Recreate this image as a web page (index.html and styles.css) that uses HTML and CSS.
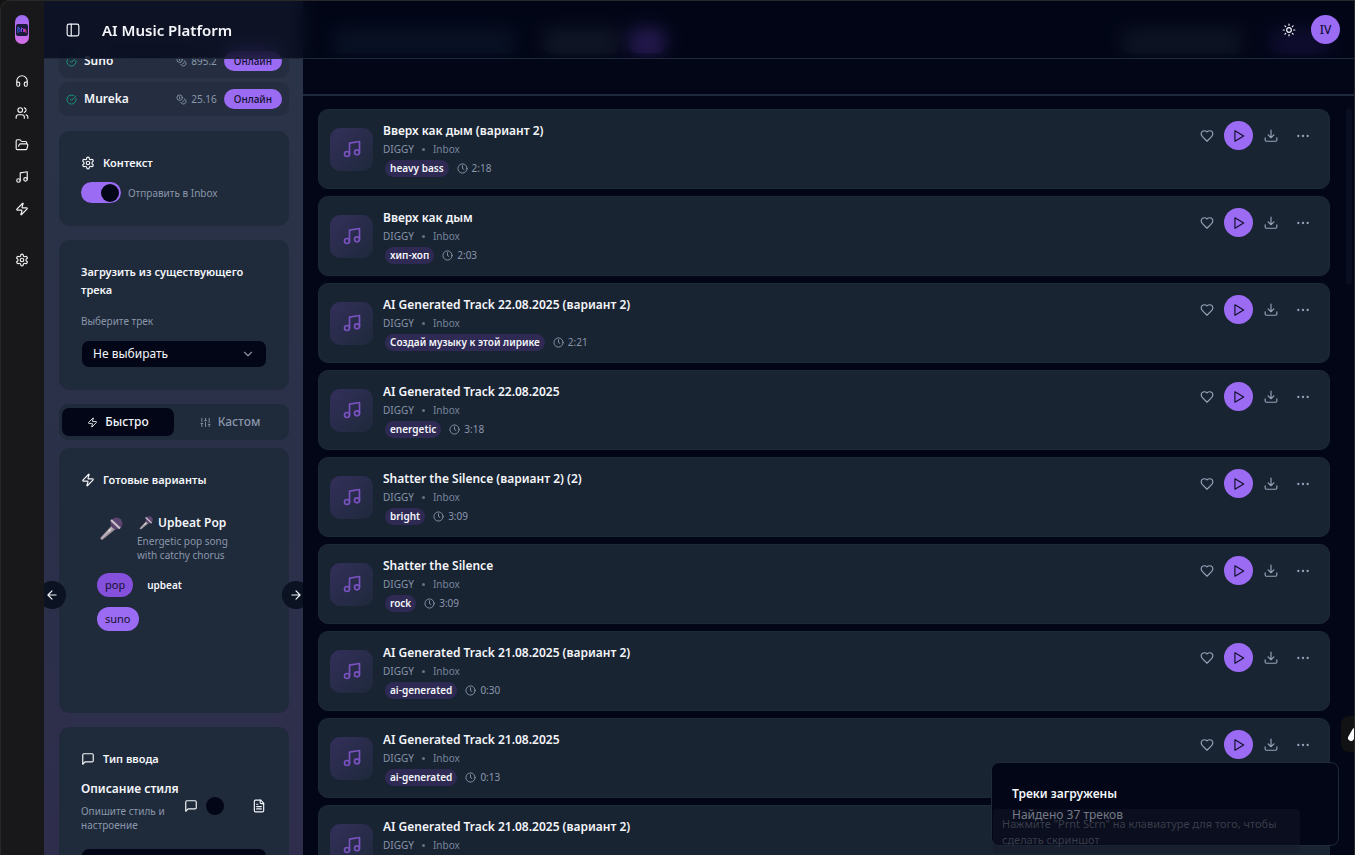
FILE: index.html
```html
<!DOCTYPE html>
<html lang="ru">
<head>
<meta charset="utf-8">
<title>AI Music Platform</title>
<link rel="stylesheet" href="styles.css">
</head>
<body>
<svg class="sprite" aria-hidden="true">
  <symbol id="i-note" viewBox="0 0 24 24"><path d="M9 18V5l12-2v13"/><circle cx="6" cy="18" r="3"/><circle cx="18" cy="16" r="3"/></symbol>
  <symbol id="i-headphones" viewBox="0 0 24 24"><path d="M3 14h3a2 2 0 0 1 2 2v3a2 2 0 0 1-2 2H5a2 2 0 0 1-2-2v-7a9 9 0 0 1 18 0v7a2 2 0 0 1-2 2h-1a2 2 0 0 1-2-2v-3a2 2 0 0 1 2-2h3"/></symbol>
  <symbol id="i-users" viewBox="0 0 24 24"><path d="M16 21v-2a4 4 0 0 0-4-4H6a4 4 0 0 0-4 4v2"/><circle cx="9" cy="7" r="4"/><path d="M22 21v-2a4 4 0 0 0-3-3.87M16 3.13a4 4 0 0 1 0 7.75"/></symbol>
  <symbol id="i-folder" viewBox="0 0 24 24"><path d="m6 14 1.5-2.9A2 2 0 0 1 9.24 10H20a2 2 0 0 1 1.94 2.5l-1.54 6a2 2 0 0 1-1.95 1.5H4a2 2 0 0 1-2-2V5a2 2 0 0 1 2-2h3.9a2 2 0 0 1 1.69.9l.81 1.2a2 2 0 0 0 1.67.9H18a2 2 0 0 1 2 2v2"/></symbol>
  <symbol id="i-zap" viewBox="0 0 24 24"><path d="M4 14a1 1 0 0 1-.78-1.63l9.9-10.2a.5.5 0 0 1 .86.46l-1.92 6.02A1 1 0 0 0 13 10h7a1 1 0 0 1 .78 1.63l-9.9 10.2a.5.5 0 0 1-.86-.46l1.92-6.02A1 1 0 0 0 11 14z"/></symbol>
  <symbol id="i-gear" viewBox="0 0 24 24"><path d="M12.22 2h-.44a2 2 0 0 0-2 2v.18a2 2 0 0 1-1 1.73l-.43.25a2 2 0 0 1-2 0l-.15-.08a2 2 0 0 0-2.73.73l-.22.38a2 2 0 0 0 .73 2.73l.15.1a2 2 0 0 1 1 1.72v.51a2 2 0 0 1-1 1.74l-.15.09a2 2 0 0 0-.73 2.73l.22.38a2 2 0 0 0 2.73.73l.15-.08a2 2 0 0 1 2 0l.43.25a2 2 0 0 1 1 1.73V20a2 2 0 0 0 2 2h.44a2 2 0 0 0 2-2v-.18a2 2 0 0 1 1-1.73l.43-.25a2 2 0 0 1 2 0l.15.08a2 2 0 0 0 2.73-.73l.22-.39a2 2 0 0 0-.73-2.73l-.15-.08a2 2 0 0 1-1-1.74v-.5a2 2 0 0 1 1-1.74l.15-.09a2 2 0 0 0 .73-2.73l-.22-.38a2 2 0 0 0-2.73-.73l-.15.08a2 2 0 0 1-2 0l-.43-.25a2 2 0 0 1-1-1.73V4a2 2 0 0 0-2-2z"/><circle cx="12" cy="12" r="3"/></symbol>
  <symbol id="i-check" viewBox="0 0 24 24"><path d="M21.8 10A10 10 0 1 1 17 3.34"/><path d="m9 11 3 3L22 4"/></symbol>
  <symbol id="i-coins" viewBox="0 0 24 24"><circle cx="8" cy="8" r="6"/><path d="M18.09 10.37A6 6 0 1 1 10.34 18M7 6h1v4M16.71 13.88l.7.71-2.82 2.82"/></symbol>
  <symbol id="i-sliders" viewBox="0 0 24 24"><path d="M4 21v-7M4 10V3M12 21v-9M12 8V3M20 21v-5M20 12V3M2 14h4M10 8h4M18 16h4"/></symbol>
  <symbol id="i-chat" viewBox="0 0 24 24"><path d="M21 15a2 2 0 0 1-2 2H7l-4 4V5a2 2 0 0 1 2-2h14a2 2 0 0 1 2 2z"/></symbol>
  <symbol id="i-doc" viewBox="0 0 24 24"><path d="M15 2H6a2 2 0 0 0-2 2v16a2 2 0 0 0 2 2h12a2 2 0 0 0 2-2V7z"/><path d="M14 2v4a2 2 0 0 0 2 2h4M10 9H8M16 13H8M16 17H8"/></symbol>
  <symbol id="i-chevron" viewBox="0 0 24 24"><path d="m6 9 6 6 6-6"/></symbol>
  <symbol id="i-left" viewBox="0 0 24 24"><path d="m12 19-7-7 7-7M19 12H5"/></symbol>
  <symbol id="i-right" viewBox="0 0 24 24"><path d="M5 12h14M12 5l7 7-7 7"/></symbol>
  <symbol id="i-panel" viewBox="0 0 24 24"><rect x="2" y="2" width="20" height="20" rx="3"/><path d="M9 2v20"/></symbol>
  <symbol id="i-sun" viewBox="0 0 24 24"><circle cx="12" cy="12" r="4"/><path d="M12 2v2M12 20v2M4.93 4.93l1.41 1.41M17.66 17.66l1.41 1.41M2 12h2M20 12h2M6.34 17.66l-1.41 1.41M19.07 4.93l-1.41 1.41"/></symbol>
  <symbol id="i-heart" viewBox="0 0 24 24"><path d="M19 14c1.49-1.46 3-3.21 3-5.5A5.5 5.5 0 0 0 16.5 3c-1.76 0-3 .5-4.5 2-1.5-1.5-2.74-2-4.5-2A5.5 5.5 0 0 0 2 8.5c0 2.3 1.5 4.05 3 5.5l7 7z"/></symbol>
  <symbol id="i-play" viewBox="0 0 24 24"><path d="m5 3 15 9-15 9z"/></symbol>
  <symbol id="i-download" viewBox="0 0 24 24"><path d="M22 15v4a2 2 0 0 1-2 2H4a2 2 0 0 1-2-2v-4M7 10l5 5 5-5M12 15V2"/></symbol>
  <symbol id="i-dots" viewBox="0 0 24 24"><circle cx="12" cy="12" r="1"/><circle cx="20" cy="12" r="1"/><circle cx="4" cy="12" r="1"/></symbol>
  <symbol id="i-clock" viewBox="0 0 24 24"><circle cx="12" cy="12" r="10"/><path d="M12 6v6l3 2"/></symbol>
  <symbol id="i-mic" viewBox="0 0 24 24">
    <path d="M14 7 1.6 20.4q-.6 1.4.2 1.9.7.8 2 .2L18 11z" fill="#9d929c" stroke="none"/>
    <path d="M14.5 8 2 21.5l.6.6L16 9.500z" fill="#c4bac0" stroke="none"/>
    <circle cx="17.500" cy="6.500" r="6" fill="#5b4570" stroke="none"/>
    <path d="m12 3 9 8.500" stroke="#c9c0cc" stroke-width="2.200"/>
    <circle cx="10.500" cy="13.500" r="1" fill="#ece6ea" stroke="none"/>
  </symbol>
</svg>

<div class="app">
  <nav class="rail" aria-label="Разделы">
    <a class="logo" href="#" aria-label="AI Music">
      <svg viewBox="0 0 14 12"><rect x="1" width="12" height="12" rx="2" fill="#1b1c3c"/><path d="M3 9V3l2 2v3" stroke="#3b62f0" fill="none"/><path d="M6.500 8V4l2 1v3" stroke="#8b3fe0" fill="none"/><path d="M9.500 8V5l1.500 1v3" stroke="#d83b8e" fill="none"/></svg>
    </a>
    <a href="#" aria-label="Генерация"><svg class="icon"><use href="#i-headphones"/></svg></a>
    <a href="#" aria-label="Артисты"><svg class="icon"><use href="#i-users"/></svg></a>
    <a href="#" aria-label="Проекты"><svg class="icon"><use href="#i-folder"/></svg></a>
    <a href="#" aria-label="Треки"><svg class="icon"><use href="#i-note"/></svg></a>
    <a href="#" aria-label="Быстро"><svg class="icon"><use href="#i-zap"/></svg></a>
    <a class="rail-settings" href="#" aria-label="Настройки"><svg class="icon"><use href="#i-gear"/></svg></a>
  </nav>

  <aside class="sidebar">
    <div class="providers">
      <div class="provider">
        <svg class="icon small ok"><use href="#i-check"/></svg><strong>Suno</strong>
        <span class="credits"><svg class="icon small"><use href="#i-coins"/></svg>895.2</span><span class="badge">Онлайн</span>
      </div>
      <div class="provider">
        <svg class="icon small ok"><use href="#i-check"/></svg><strong>Mureka</strong>
        <span class="credits"><svg class="icon small"><use href="#i-coins"/></svg>25.16</span><span class="badge">Онлайн</span>
      </div>
    </div>

    <section class="panel">
      <h2><svg class="icon"><use href="#i-gear"/></svg>Контекст</h2>
      <div class="switch-row">
        <input class="switch" type="checkbox" role="switch" id="inbox" checked>
        <label for="inbox">Отправить в Inbox</label>
      </div>
    </section>

    <section class="panel load">
      <h2>Загрузить из существующего трека</h2>
      <label for="source">Выберите трек</label>
      <div class="select">
        <select id="source"><option>Не выбирать</option></select>
        <svg class="icon"><use href="#i-chevron"/></svg>
      </div>
    </section>

    <div class="tabs" role="tablist">
      <button type="button" role="tab" aria-selected="true"><svg class="icon small"><use href="#i-zap"/></svg>Быстро</button>
      <button type="button" role="tab" aria-selected="false"><svg class="icon small"><use href="#i-sliders"/></svg>Кастом</button>
    </div>

    <section class="panel presets">
      <h2><svg class="icon"><use href="#i-zap"/></svg>Готовые варианты</h2>
      <div class="preset">
        <div class="preset-head">
          <svg class="mic"><use href="#i-mic"/></svg>
          <div>
            <h3><svg class="icon"><use href="#i-mic"/></svg>Upbeat Pop</h3>
            <p>Energetic pop song with catchy chorus</p>
          </div>
        </div>
        <div class="pills">
          <span class="pill deep">pop</span><span class="pill plain">upbeat</span><span class="pill">suno</span>
        </div>
      </div>
      <button class="arrow prev" type="button" aria-label="Назад"><svg class="icon"><use href="#i-left"/></svg></button>
      <button class="arrow next" type="button" aria-label="Вперёд"><svg class="icon"><use href="#i-right"/></svg></button>
    </section>

    <section class="panel">
      <h2><svg class="icon"><use href="#i-chat"/></svg>Тип ввода</h2>
      <div class="mode">
        <label for="mode"><strong>Описание стиля</strong><small>Опишите стиль и настроение</small></label>
        <svg class="icon"><use href="#i-chat"/></svg>
        <input class="switch" type="checkbox" role="switch" id="mode">
        <svg class="icon"><use href="#i-doc"/></svg>
      </div>
      <div class="prompt"><textarea aria-label="Описание стиля" rows="4"></textarea></div>
    </section>
  </aside>

  <main class="content">
    <div class="toolbar">
      <span class="field"></span><span class="filter"></span><span class="count"></span>
      <span class="sort"></span><span class="create"></span>
    </div>
    <div class="tracks">
      <article class="track"><div class="cover"><svg class="icon"><use href="#i-note"/></svg></div><div class="info"><h3>Вверх как дым (вариант 2)</h3><p class="meta"><span>DIGGY</span><i></i><span>Inbox</span></p><p class="tags"><span class="tag">heavy bass</span><svg class="icon small"><use href="#i-clock"/></svg><time>2:18</time></p></div><div class="actions"><button type="button" aria-label="Нравится"><svg class="icon"><use href="#i-heart"/></svg></button><button class="play" type="button" aria-label="Слушать"><svg class="icon"><use href="#i-play"/></svg></button><button type="button" aria-label="Скачать"><svg class="icon"><use href="#i-download"/></svg></button><button type="button" aria-label="Ещё"><svg class="icon"><use href="#i-dots"/></svg></button></div></article>
      <article class="track"><div class="cover"><svg class="icon"><use href="#i-note"/></svg></div><div class="info"><h3>Вверх как дым</h3><p class="meta"><span>DIGGY</span><i></i><span>Inbox</span></p><p class="tags"><span class="tag">хип-хоп</span><svg class="icon small"><use href="#i-clock"/></svg><time>2:03</time></p></div><div class="actions"><button type="button" aria-label="Нравится"><svg class="icon"><use href="#i-heart"/></svg></button><button class="play" type="button" aria-label="Слушать"><svg class="icon"><use href="#i-play"/></svg></button><button type="button" aria-label="Скачать"><svg class="icon"><use href="#i-download"/></svg></button><button type="button" aria-label="Ещё"><svg class="icon"><use href="#i-dots"/></svg></button></div></article>
      <article class="track"><div class="cover"><svg class="icon"><use href="#i-note"/></svg></div><div class="info"><h3>AI Generated Track 22.08.2025 (вариант 2)</h3><p class="meta"><span>DIGGY</span><i></i><span>Inbox</span></p><p class="tags"><span class="tag">Создай музыку к этой лирике</span><svg class="icon small"><use href="#i-clock"/></svg><time>2:21</time></p></div><div class="actions"><button type="button" aria-label="Нравится"><svg class="icon"><use href="#i-heart"/></svg></button><button class="play" type="button" aria-label="Слушать"><svg class="icon"><use href="#i-play"/></svg></button><button type="button" aria-label="Скачать"><svg class="icon"><use href="#i-download"/></svg></button><button type="button" aria-label="Ещё"><svg class="icon"><use href="#i-dots"/></svg></button></div></article>
      <article class="track"><div class="cover"><svg class="icon"><use href="#i-note"/></svg></div><div class="info"><h3>AI Generated Track 22.08.2025</h3><p class="meta"><span>DIGGY</span><i></i><span>Inbox</span></p><p class="tags"><span class="tag">energetic</span><svg class="icon small"><use href="#i-clock"/></svg><time>3:18</time></p></div><div class="actions"><button type="button" aria-label="Нравится"><svg class="icon"><use href="#i-heart"/></svg></button><button class="play" type="button" aria-label="Слушать"><svg class="icon"><use href="#i-play"/></svg></button><button type="button" aria-label="Скачать"><svg class="icon"><use href="#i-download"/></svg></button><button type="button" aria-label="Ещё"><svg class="icon"><use href="#i-dots"/></svg></button></div></article>
      <article class="track"><div class="cover"><svg class="icon"><use href="#i-note"/></svg></div><div class="info"><h3>Shatter the Silence (вариант 2) (2)</h3><p class="meta"><span>DIGGY</span><i></i><span>Inbox</span></p><p class="tags"><span class="tag">bright</span><svg class="icon small"><use href="#i-clock"/></svg><time>3:09</time></p></div><div class="actions"><button type="button" aria-label="Нравится"><svg class="icon"><use href="#i-heart"/></svg></button><button class="play" type="button" aria-label="Слушать"><svg class="icon"><use href="#i-play"/></svg></button><button type="button" aria-label="Скачать"><svg class="icon"><use href="#i-download"/></svg></button><button type="button" aria-label="Ещё"><svg class="icon"><use href="#i-dots"/></svg></button></div></article>
      <article class="track"><div class="cover"><svg class="icon"><use href="#i-note"/></svg></div><div class="info"><h3>Shatter the Silence</h3><p class="meta"><span>DIGGY</span><i></i><span>Inbox</span></p><p class="tags"><span class="tag">rock</span><svg class="icon small"><use href="#i-clock"/></svg><time>3:09</time></p></div><div class="actions"><button type="button" aria-label="Нравится"><svg class="icon"><use href="#i-heart"/></svg></button><button class="play" type="button" aria-label="Слушать"><svg class="icon"><use href="#i-play"/></svg></button><button type="button" aria-label="Скачать"><svg class="icon"><use href="#i-download"/></svg></button><button type="button" aria-label="Ещё"><svg class="icon"><use href="#i-dots"/></svg></button></div></article>
      <article class="track"><div class="cover"><svg class="icon"><use href="#i-note"/></svg></div><div class="info"><h3>AI Generated Track 21.08.2025 (вариант 2)</h3><p class="meta"><span>DIGGY</span><i></i><span>Inbox</span></p><p class="tags"><span class="tag">ai-generated</span><svg class="icon small"><use href="#i-clock"/></svg><time>0:30</time></p></div><div class="actions"><button type="button" aria-label="Нравится"><svg class="icon"><use href="#i-heart"/></svg></button><button class="play" type="button" aria-label="Слушать"><svg class="icon"><use href="#i-play"/></svg></button><button type="button" aria-label="Скачать"><svg class="icon"><use href="#i-download"/></svg></button><button type="button" aria-label="Ещё"><svg class="icon"><use href="#i-dots"/></svg></button></div></article>
      <article class="track"><div class="cover"><svg class="icon"><use href="#i-note"/></svg></div><div class="info"><h3>AI Generated Track 21.08.2025</h3><p class="meta"><span>DIGGY</span><i></i><span>Inbox</span></p><p class="tags"><span class="tag">ai-generated</span><svg class="icon small"><use href="#i-clock"/></svg><time>0:13</time></p></div><div class="actions"><button type="button" aria-label="Нравится"><svg class="icon"><use href="#i-heart"/></svg></button><button class="play" type="button" aria-label="Слушать"><svg class="icon"><use href="#i-play"/></svg></button><button type="button" aria-label="Скачать"><svg class="icon"><use href="#i-download"/></svg></button><button type="button" aria-label="Ещё"><svg class="icon"><use href="#i-dots"/></svg></button></div></article>
      <article class="track"><div class="cover"><svg class="icon"><use href="#i-note"/></svg></div><div class="info"><h3>AI Generated Track 21.08.2025 (вариант 2)</h3><p class="meta"><span>DIGGY</span><i></i><span>Inbox</span></p><p class="tags"><span class="tag"></span></p></div></article>
    </div>
    <span class="scrollbar"></span>
  </main>

  <header class="topbar">
    <button type="button" aria-label="Боковая панель"><svg class="icon"><use href="#i-panel"/></svg></button>
    <h1>AI Music Platform</h1>
    <button class="theme" type="button" aria-label="Тема"><svg class="icon"><use href="#i-sun"/></svg></button>
    <button class="avatar" type="button">IV</button>
  </header>

  <div class="toast" role="status"><strong>Треки загружены</strong><p>Найдено 37 треков</p></div>
  <div class="hint">Нажмите "Prnt Scrn" на клавиатуре для того, чтобы сделать скриншот</div>
  <div class="edge-widget"><svg viewBox="0 0 14 36"><path d="M10 22 14 15" stroke="#fff" stroke-width="6" stroke-linecap="round"/></svg></div>
</div>
</body>
</html>
```
FILE: styles.css
```css
* { box-sizing: border-box; }

:root {
  --bg: #020617;
  --line: #1e293b;
  --panel: #1f2a3a;
  --accent: #9b6bf3;
  --text: #f4f6fa;
  --muted: #8a97ab;
}

body {
  margin: 0;
  background: #141414;
  color: var(--text);
  font-family: "Noto Sans", "Open Sans", sans-serif;
  font-size: 12px;
  line-height: 18px;
}

h1, h2, h3, p { margin: 0; font-size: inherit; font-weight: 600; }
p { font-weight: 400; }
strong { font-weight: 600; }
button, select, textarea { font: inherit; color: inherit; border: 0; padding: 0; background: none; }
a { color: inherit; }

.sprite { position: absolute; width: 0; height: 0; }
.icon {
  width: 14px;
  height: 14px;
  flex: none;
  display: block;
  fill: none;
  stroke: currentColor;
  stroke-width: 2;
  stroke-linecap: round;
  stroke-linejoin: round;
}
.icon.small { width: 11px; height: 11px; }

.app {
  position: relative;
  display: grid;
  grid-template-columns: 43px 259px minmax(0, 1fr);
  height: 100vh;
  overflow: hidden;
  border: 1px solid #282828;
  border-bottom: 0;
  border-top-left-radius: 10px;
  background: #18181a;
}

.rail {
  display: flex;
  flex-direction: column;
  align-items: center;
  gap: 3px;
  padding: 14px 1px 0 0;
  color: #f0f0f0;
}
.rail a { display: grid; place-items: center; width: 29px; height: 29px; }
.rail .logo {
  width: 14px;
  margin-bottom: 19px;
  border-radius: 7px;
  background: linear-gradient(#9b6bf3, #d56fe6);
}
.logo svg { width: 14px; height: 12px; }
.rail .rail-settings { margin-top: 19px; }

.sidebar {
  position: relative;
  overflow: hidden;
  display: flex;
  flex-direction: column;
  gap: 14px;
  padding: 43px 14px 0 15px;
  background: linear-gradient(#2a3448, #2a3148 40%, #2e2e4c);
}
.sidebar > * { flex: none; }
.providers { display: grid; gap: 4px; padding-bottom: 1px; }
.provider {
  display: flex;
  align-items: center;
  height: 34px;
  padding: 0 7px;
  border-radius: 9px;
  background: #242e40;
}
.provider strong { margin-left: 7px; }
.ok { color: #1c9c78; }
.credits { display: flex; align-items: center; gap: 4px; margin-left: auto; color: var(--muted); font-size: 10px; }
.badge {
  margin-left: 7px;
  padding: 1px 10px;
  border-radius: 10px;
  background: var(--accent);
  color: #11102e;
  font-size: 10px;
  font-weight: 500;
}

.panel { padding: 23px 22px; border-radius: 11px; background: var(--panel); }
.panel h2 { display: flex; align-items: center; gap: 8px; font-size: 11px; }
.panel label { color: var(--muted); font-size: 10px; }

.switch-row { display: flex; align-items: center; gap: 7px; margin-top: 10px; }
.switch {
  appearance: none;
  flex: none;
  display: flex;
  align-items: center;
  width: 40px;
  height: 21px;
  margin: 0;
  padding: 0 2px;
  border-radius: 11px;
  background: var(--panel);
}
.switch::before { content: ""; width: 18px; height: 18px; border-radius: 50%; background: var(--bg); }
.switch:checked { justify-content: flex-end; background: var(--accent); }

.load h2 { margin-bottom: 14px; }
.load label { display: block; margin-bottom: 11px; line-height: 17px; }
.select { position: relative; padding: 0 1px; }
.select select {
  display: block;
  appearance: none;
  width: 100%;
  height: 26px;
  padding: 0 11px;
  border-radius: 7px;
  background: var(--bg);
}
.select .icon { position: absolute; top: 6px; right: 12px; color: #8b8f99; }

.tabs {
  display: grid;
  grid-template-columns: 1fr 1fr;
  margin-bottom: -6px;
  padding: 4px 3px;
  border-radius: 9px;
  background: var(--panel);
  color: var(--muted);
}
.tabs button {
  display: flex;
  align-items: center;
  justify-content: center;
  gap: 7px;
  height: 28px;
  border-radius: 7px;
  font-weight: 500;
}
.tabs [aria-selected="true"] { background: var(--bg); color: var(--text); }

.presets { position: relative; }
.preset { padding: 25px 32px 59px 16px; }
.preset-head { display: grid; grid-template-columns: 26px 1fr; gap: 14px; }
.mic { width: 24px; height: 24px; margin-top: 3px; margin-left: 2px; }
.preset h3 { display: flex; align-items: center; gap: 5px; white-space: nowrap; }
.preset h3 .icon { margin-left: 2px; }
.preset p { margin-top: 2px; color: var(--muted); font-size: 10px; line-height: 14px; }
.pills { display: flex; flex-wrap: wrap; gap: 10px 6px; margin-top: 11px; }
.pill {
  padding: 3px 8px;
  border-radius: 12px;
  background: var(--accent);
  color: #14102f;
  font-size: 11px;
}
.pill.deep { background: #8450dc; }
.pill.plain { background: none; color: var(--text); font-size: 10px; font-weight: 600; }
.arrow {
  position: absolute;
  top: 133px;
  display: grid;
  place-items: center;
  width: 28px;
  height: 28px;
  border-radius: 50%;
  background: #0b1221;
}
.prev { left: -21px; }
.next { right: -21px; }

.mode { display: grid; grid-template-columns: 96px 14px 40px 14px; gap: 7px; align-items: center; margin-top: 12px; }
.mode strong, .mode small { display: block; }
.mode strong { color: var(--text); font-size: 12px; white-space: nowrap; }
.mode small { margin-top: 6px; font-size: 10px; line-height: 14px; }
.mode .switch { padding: 0 1px; background: none; }
.prompt { margin-top: 17px; padding: 0 1px; }
.prompt textarea { display: block; width: 100%; border-radius: 7px; background: var(--bg); resize: none; }

.content {
  position: relative;
  display: flex;
  flex-direction: column;
  overflow: hidden;
  background: var(--bg);
}
.toolbar {
  display: flex;
  flex: none;
  align-items: flex-start;
  height: 95px;
  padding: 28px 24px 0 30px;
  border-bottom: 2px solid var(--line);
}
.toolbar span { height: 24px; border-radius: 8px; }
.field { width: 182px; background: #1d3148; }
.filter { width: 76px; margin-left: 28px; background: #39404e; }
.count { width: 36px; margin-left: 10px; background: #8550e6; }
.sort { width: 120px; margin-left: auto; background: #313844; }
.create { width: 60px; margin-left: 28px; background: #33206e; }

.tracks { display: grid; gap: 7px; padding: 13px 24px 0 15px; }
.track {
  display: flex;
  align-items: center;
  gap: 10px;
  padding: 11px;
  border: 1px solid #1c2938;
  border-radius: 10px;
  background: #192433;
}
.cover {
  display: grid;
  place-items: center;
  flex: none;
  width: 43px;
  height: 43px;
  border-radius: 10px;
  background: linear-gradient(135deg, #332f5a, #1e293b);
  color: #7952c0;
}
.cover .icon { width: 20px; height: 20px; }
.info { flex: 1; min-width: 0; }
.info h3 { line-height: 20px; }
.meta { display: flex; align-items: center; gap: 8px; color: #75839a; font-size: 10px; line-height: 16px; }
.meta span:first-child { color: #8593a8; }
.meta i { width: 3px; height: 3px; border-radius: 50%; background: #65738a; }
.tags { display: flex; align-items: center; margin-top: 3px; color: var(--muted); font-size: 10px; line-height: 17px; }
.tag { min-height: 17px; margin-left: 2px; padding: 0 5px; border-radius: 9px; background: #2f2a54; color: var(--text); font-size: 10px; font-weight: 600; }
.tag:empty { width: 72px; }
.tags .icon { margin: 0 4px 0 8px; }
.actions { display: flex; align-self: flex-start; gap: 3px; padding-right: 1px; color: #94a3b8; }
.actions button { display: grid; place-items: center; width: 29px; height: 29px; border-radius: 50%; }
.actions .play { background: var(--accent); color: #10102a; }

.scrollbar { position: absolute; top: 107px; right: 2px; width: 6px; height: 177px; border-radius: 3px; background: #090f20; }

.topbar {
  position: absolute;
  inset: 0 0 auto 43px;
  display: flex;
  align-items: center;
  height: 58px;
  padding: 0 14px 0 22px;
  border-bottom: 1px solid var(--line);
  background: rgba(2, 6, 23, .7);
  backdrop-filter: blur(9px);
}
.topbar h1 { margin-left: 22px; font-size: 15px; line-height: 22px; }
.theme { margin-left: auto; }
.avatar { width: 29px; height: 29px; margin-left: 15px; border-radius: 50%; background: var(--accent); color: #17103a; font-weight: 500; }

.toast {
  position: absolute;
  right: 15px;
  bottom: 9px;
  width: 348px;
  padding: 22px 20px 21px;
  border: 1px solid var(--line);
  border-radius: 8px;
  background: var(--bg);
}
.toast p { margin-top: 3px; color: #b4b8c1; }
.hint {
  position: absolute;
  right: 54px;
  bottom: 2px;
  width: 307px;
  padding: 7px 9px 5px;
  border-radius: 4px;
  background: rgba(22, 28, 42, .4);
  color: #383d4a;
  font-size: 11px;
  line-height: 16px;
}
.edge-widget { position: absolute; right: 0; bottom: 103px; width: 13px; height: 36px; border-radius: 8px 0 0 8px; background: #111214; overflow: hidden; }
.edge-widget svg { display: block; width: 14px; height: 36px; }
```
